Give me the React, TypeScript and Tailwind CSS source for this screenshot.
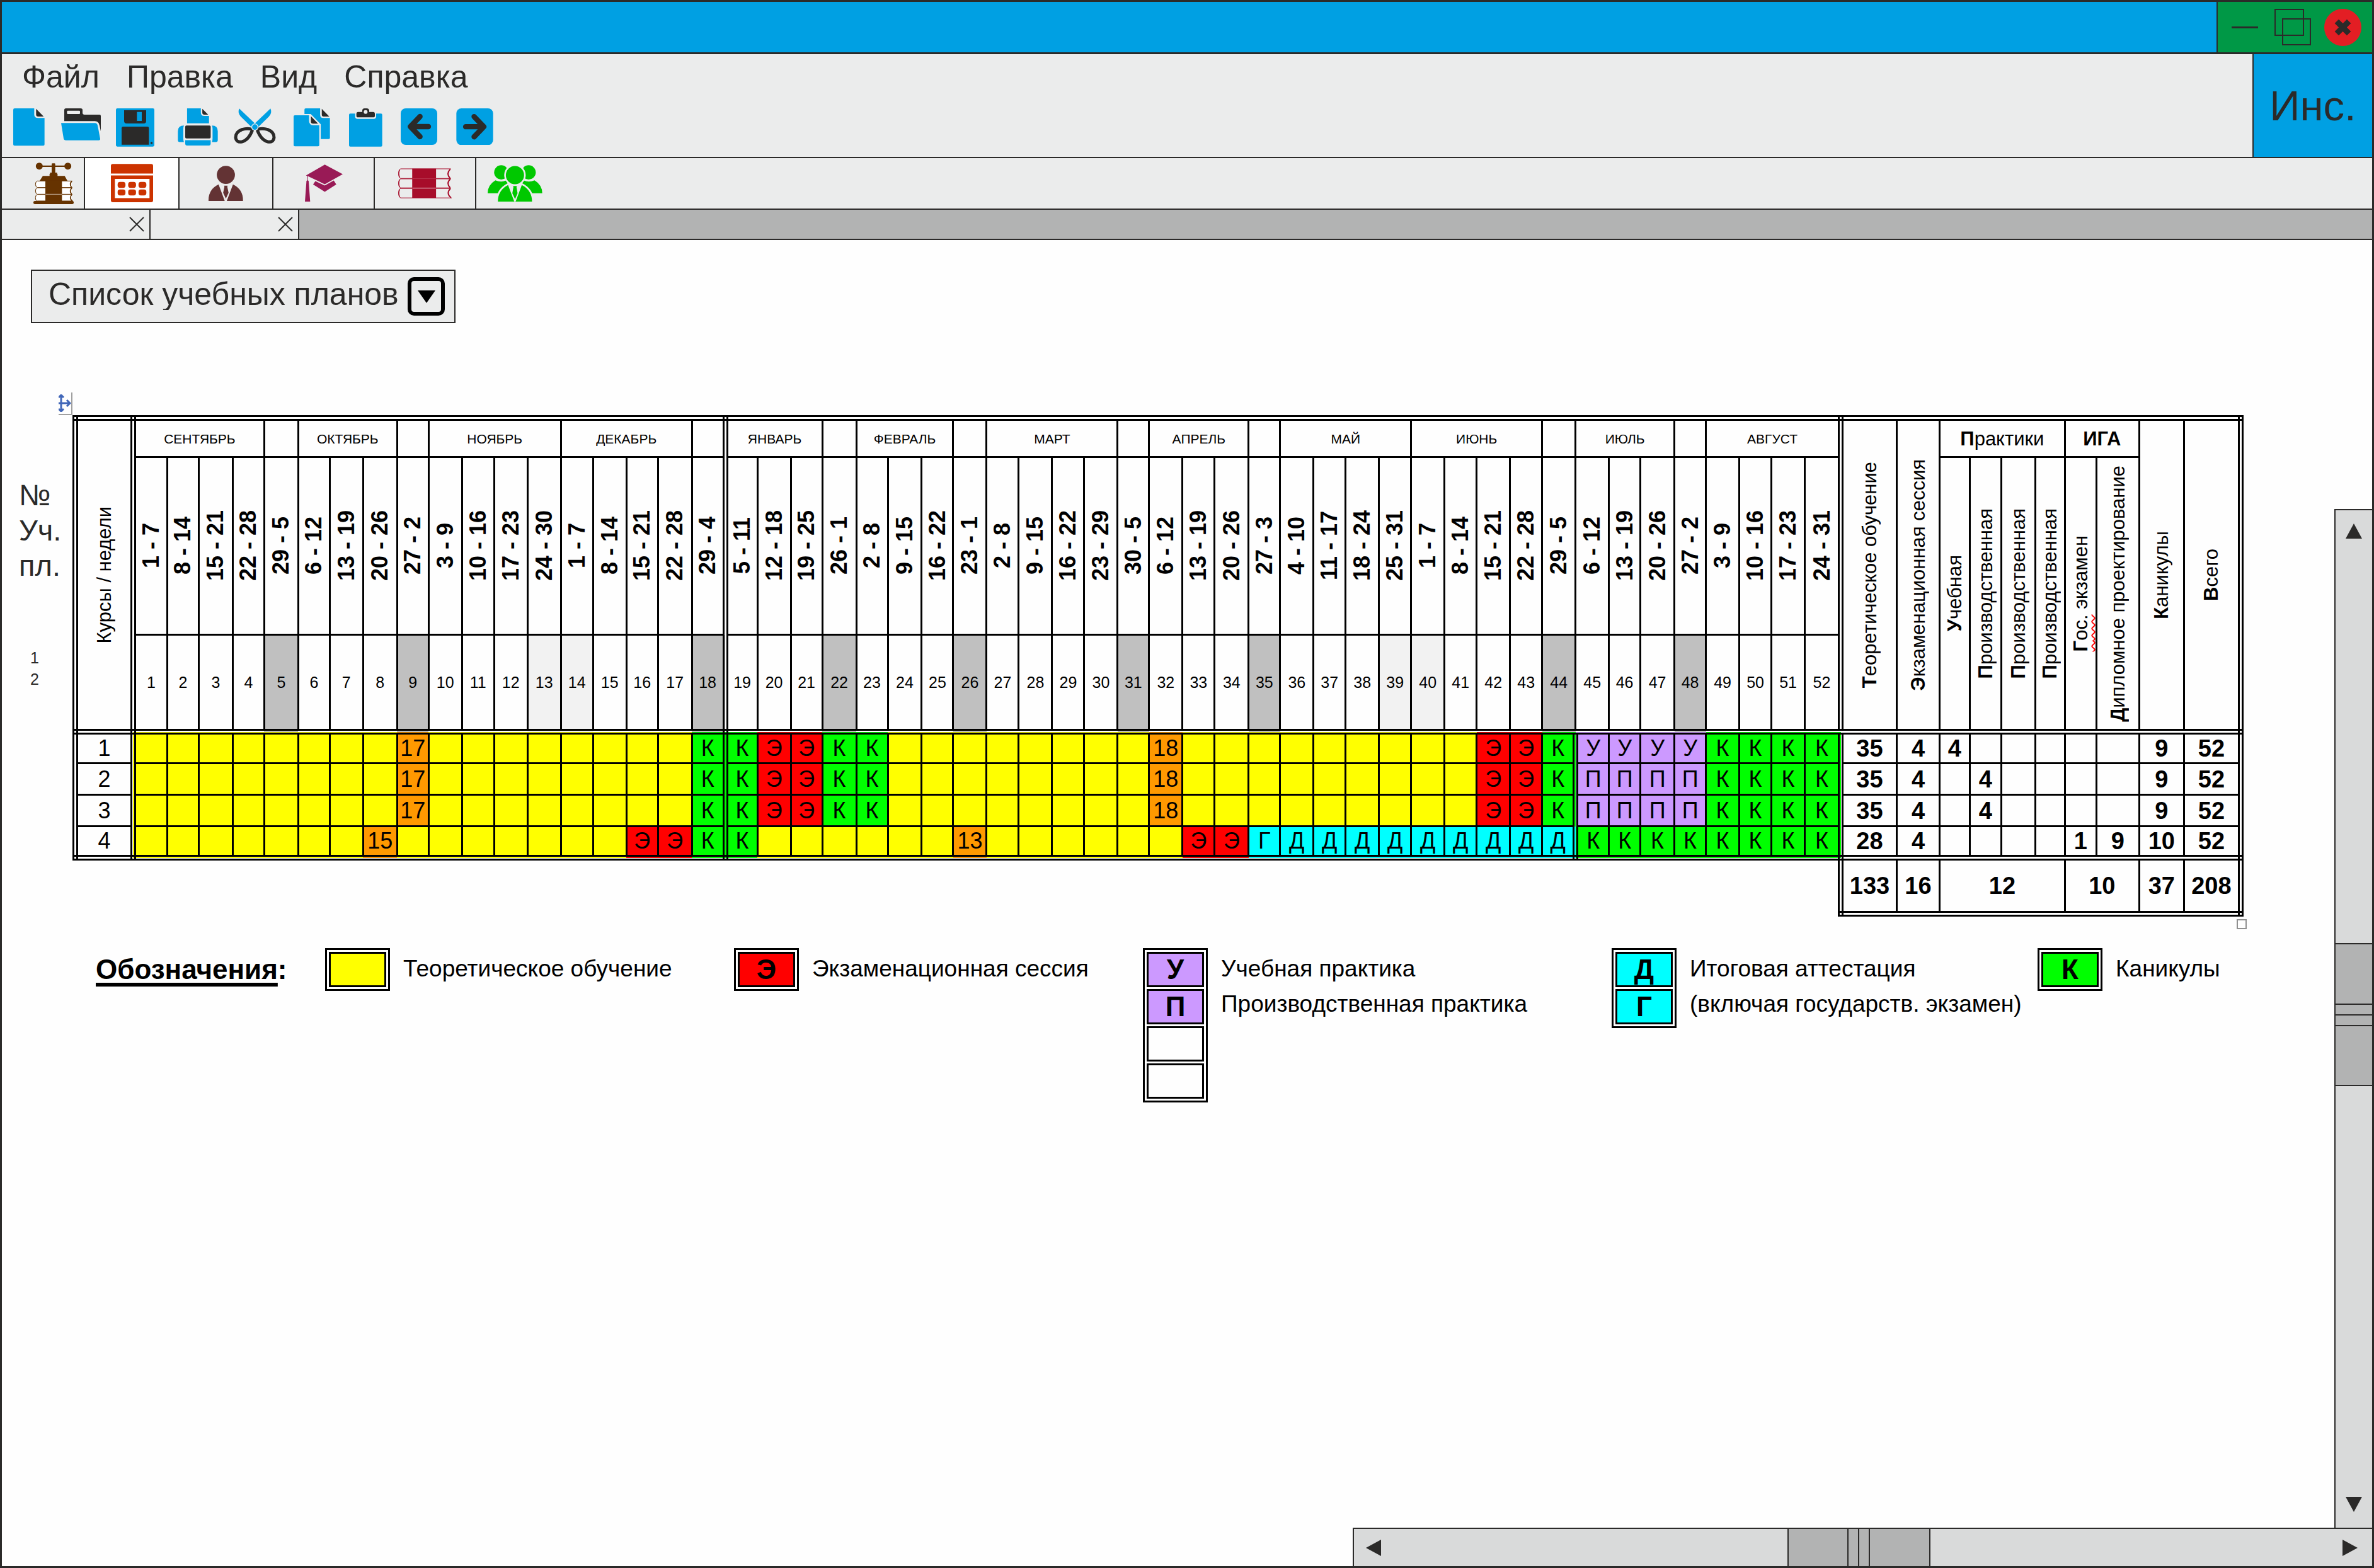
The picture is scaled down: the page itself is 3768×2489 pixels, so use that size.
import React from "react";

const COLUMN_EDGES = [
  119, 211, 265, 315, 369, 419, 473, 523, 576, 630, 680, 733, 784, 837, 890, 941, 994, 1044, 1098, 1151,
  1202, 1255, 1305, 1359, 1409, 1463, 1513, 1566, 1617, 1670, 1721, 1774, 1824, 1877, 1928, 1982, 2032,
  2085, 2136, 2189, 2240, 2293, 2344, 2397, 2448, 2501, 2554, 2604, 2658, 2708, 2761, 2812, 2865, 2922,
  3011, 3079, 3127, 3177, 3231, 3278, 3328, 3396, 3467, 3557,
];
const TOTAL_WIDTH = COLUMN_EDGES[COLUMN_EDGES.length - 1] - COLUMN_EDGES[0];

const MONTHS: [string, number][] = [
  ["СЕНТЯБРЬ", 4], ["", 1], ["ОКТЯБРЬ", 3], ["", 1], ["НОЯБРЬ", 4], ["ДЕКАБРЬ", 4], ["", 1],
  ["ЯНВАРЬ", 3], ["", 1], ["ФЕВРАЛЬ", 3], ["", 1], ["МАРТ", 4], ["", 1], ["АПРЕЛЬ", 3], ["", 1],
  ["МАЙ", 4], ["ИЮНЬ", 4], ["", 1], ["ИЮЛЬ", 3], ["", 1], ["АВГУСТ", 4],
];

const DATES = [
  "1 - 7", "8 - 14", "15 - 21", "22 - 28", "29 - 5", "6 - 12", "13 - 19", "20 - 26", "27 - 2",
  "3 - 9", "10 - 16", "17 - 23", "24 - 30", "1 - 7", "8 - 14", "15 - 21", "22 - 28", "29 - 4",
  "5 - 11", "12 - 18", "19 - 25", "26 - 1", "2 - 8", "9 - 15", "16 - 22", "23 - 1", "2 - 8",
  "9 - 15", "16 - 22", "23 - 29", "30 - 5", "6 - 12", "13 - 19", "20 - 26", "27 - 3", "4 - 10",
  "11 - 17", "18 - 24", "25 - 31", "1 - 7", "8 - 14", "15 - 21", "22 - 28", "29 - 5", "6 - 12",
  "13 - 19", "20 - 26", "27 - 2", "3 - 9", "10 - 16", "17 - 23", "24 - 31",
];

const GREY_WEEKS = [5, 9, 18, 22, 26, 31, 35, 44, 48];
const PALE_WEEKS = [13, 14, 39, 40];

const repeat = (value: string, count: number) => Array<string>(count).fill(value);

const studyYear = (practice: string) => [
  ...repeat("", 8), "17", ...repeat("", 8), "К", "К", "Э", "Э", "К", "К", ...repeat("", 8), "18",
  ...repeat("", 9), "Э", "Э", "К", ...repeat(practice, 4), ...repeat("К", 4),
];

const COURSES: { weeks: string[]; totals: string[] }[] = [
  { weeks: studyYear("У"), totals: ["35", "4", "4", "", "", "", "", "", "9", "52"] },
  { weeks: studyYear("П"), totals: ["35", "4", "", "4", "", "", "", "", "9", "52"] },
  { weeks: studyYear("П"), totals: ["35", "4", "", "4", "", "", "", "", "9", "52"] },
  {
    weeks: [
      ...repeat("", 7), "15", ...repeat("", 7), "Э", "Э", "К", "К", ...repeat("", 6), "13",
      ...repeat("", 6), "Э", "Э", "Г", ...repeat("Д", 9), ...repeat("К", 8),
    ],
    totals: ["28", "4", "", "", "", "", "1", "9", "10", "52"],
  },
];

const FILLS: Record<string, string> = {
  "": "bg-[#ffff00]",
  К: "bg-[#00ff00]",
  Э: "bg-[#ff0000]",
  У: "bg-[#cc99ff]",
  П: "bg-[#cc99ff]",
  Д: "bg-[#00ffff]",
  Г: "bg-[#00ffff]",
};
const fillFor = (value: string) => FILLS[value] ?? "bg-[#ff9900]";

const LINE = "border-[3px] border-black";
const DOUBLE_RIGHT = "border-r-[9px] [border-right-style:double]";
const DOUBLE_LEFT = "border-l-[9px] [border-left-style:double]";
const DOUBLE_TOP = "border-t-[9px] [border-top-style:double]";
const DOUBLE_BOTTOM = "border-b-[9px] [border-bottom-style:double]";

function Vertical({ children, className = "" }: { children: React.ReactNode; className?: string }) {
  return (
    <div className="flex items-center justify-center">
      <span className={`rotate-180 leading-none whitespace-nowrap [writing-mode:vertical-rl] ${className}`}>{children}</span>
    </div>
  );
}

function SummaryHead({ text, rowSpan, className = "" }: { text: string; rowSpan: number; className?: string }) {
  return (
    <th rowSpan={rowSpan} scope="col" className={`font-normal ${LINE} ${DOUBLE_BOTTOM} ${className}`}>
      <Vertical className="text-[31px]">
        <b>{text[0]}</b>
        {text.slice(1)}
      </Vertical>
    </th>
  );
}

function PlanTable() {
  return (
    <table className="w-full table-fixed border-collapse text-center leading-none text-black">
      <colgroup>
        {COLUMN_EDGES.slice(1).map((edge, i) => (
          <col key={edge} style={{ width: `${((edge - COLUMN_EDGES[i]) / TOTAL_WIDTH) * 100}%` }} />
        ))}
      </colgroup>
      <thead>
        <tr className="h-[62px]">
          <th rowSpan={3} scope="col" className={`font-normal ${LINE} ${DOUBLE_LEFT} ${DOUBLE_RIGHT} ${DOUBLE_TOP} ${DOUBLE_BOTTOM}`}>
            <Vertical className="text-[31px]">Курсы / недели</Vertical>
          </th>
          {MONTHS.map(([name, span], i) => (
            <th
              key={i}
              colSpan={span}
              scope="colgroup"
              className={`text-[21px] font-normal ${LINE} ${DOUBLE_TOP} ${i === 6 || i === 20 ? DOUBLE_RIGHT : ""}`}
            >
              {name}
            </th>
          ))}
          <SummaryHead text="Теоретическое обучение" rowSpan={3} className={DOUBLE_TOP} />
          <SummaryHead text="Экзаменационная сессия" rowSpan={3} className={DOUBLE_TOP} />
          <th colSpan={4} scope="colgroup" className={`text-[31px] font-normal ${LINE} ${DOUBLE_TOP}`}>
            <b>П</b>рактики
          </th>
          <th colSpan={2} scope="colgroup" className={`text-[31px] font-bold ${LINE} ${DOUBLE_TOP}`}>
            ИГА
          </th>
          <SummaryHead text="Каникулы" rowSpan={3} className={DOUBLE_TOP} />
          <SummaryHead text="Всего" rowSpan={3} className={`${DOUBLE_TOP} ${DOUBLE_RIGHT}`} />
        </tr>
        <tr className="h-[282px]">
          {DATES.map((date, i) => (
            <th key={i} scope="col" className={`${LINE} ${i === 17 || i === 51 ? DOUBLE_RIGHT : ""}`}>
              <Vertical className="text-[36px] font-bold">{date}</Vertical>
            </th>
          ))}
          <SummaryHead text="Учебная" rowSpan={2} />
          <SummaryHead text="Производственная" rowSpan={2} />
          <SummaryHead text="Производственная" rowSpan={2} />
          <SummaryHead text="Производственная" rowSpan={2} />
          <th rowSpan={2} scope="col" className={`font-normal ${LINE} ${DOUBLE_BOTTOM}`}>
            <Vertical className="text-[31px]">
              <span className="underline decoration-[#ff0000] decoration-wavy decoration-2 [text-decoration-skip-ink:none]">
                <b>Г</b>ос.
              </span>{" "}
              экзамен
            </Vertical>
          </th>
          <SummaryHead text="Дипломное проектирование" rowSpan={2} />
        </tr>
        <tr className="h-[154px]">
          {DATES.map((_, i) => (
            <th
              key={i}
              scope="col"
              className={`text-[25px] font-normal ${LINE} ${DOUBLE_BOTTOM} ${i === 17 || i === 51 ? DOUBLE_RIGHT : ""} ${
                GREY_WEEKS.includes(i + 1) ? "bg-[#c0c0c0]" : PALE_WEEKS.includes(i + 1) ? "bg-[#f2f2f2]" : ""
              }`}
            >
              {i + 1}
            </th>
          ))}
        </tr>
      </thead>
      <tbody>
        {COURSES.map(({ weeks, totals }, row) => {
          const bottom = row === 3 ? DOUBLE_BOTTOM : "";
          return (
            <tr key={row} className="h-[50px]">
              <th scope="row" className={`text-[36px] font-normal ${LINE} ${DOUBLE_LEFT} ${DOUBLE_RIGHT} ${bottom}`}>
                {row + 1}
              </th>
              {weeks.map((value, i) => (
                <td
                  key={i}
                  className={`text-[36px] ${LINE} ${fillFor(value)} ${bottom} ${
                    i === 17 || i === 43 || i === 51 ? DOUBLE_RIGHT : ""
                  }`}
                >
                  {value}
                </td>
              ))}
              {totals.map((value, i) => (
                <td key={i} className={`text-[38px] font-bold ${LINE} ${bottom} ${i === 9 ? DOUBLE_RIGHT : ""}`}>
                  {value}
                </td>
              ))}
            </tr>
          );
        })}
      </tbody>
      <tfoot>
        <tr className="h-[89px]">
          <td colSpan={53} />
          {(
            [["133", 1], ["16", 1], ["12", 4], ["10", 2], ["37", 1], ["208", 1]] as [string, number][]
          ).map(([value, span], i) => (
            <td
              key={value}
              colSpan={span}
              className={`text-[38px] font-bold ${LINE} ${DOUBLE_BOTTOM} ${i === 0 ? DOUBLE_LEFT : ""} ${i === 5 ? DOUBLE_RIGHT : ""}`}
            >
              {value}
            </td>
          ))}
        </tr>
      </tfoot>
    </table>
  );
}

function LegendItem({ boxes, lines }: { boxes: string[]; lines: string[] }) {
  return (
    <li className="flex items-start gap-[21px]">
      <div className="flex w-[103px] shrink-0 flex-col gap-[3px] border-[3px] border-black p-[3px] text-[44px]">
        {boxes.map((box, i) => (
          <span
            key={i}
            className={`flex h-[56px] items-center justify-center border-[3px] border-black font-bold ${box === "-" ? "" : fillFor(box)}`}
          >
            {box === "-" ? "" : box}
          </span>
        ))}
      </div>
      <div className="pt-[5px] text-[37px] leading-[56px] whitespace-nowrap">
        {lines.map((line) => (
          <p key={line}>{line}</p>
        ))}
      </div>
    </li>
  );
}

function Legend() {
  return (
    <section className="grid grid-cols-[364fr_3045fr] leading-none text-black">
      <h2 className="pt-[12px] text-[44px] font-bold">
        <span className="underline decoration-[6px] underline-offset-[6px]">Обозначения</span>:
      </h2>
      <ul className="grid grid-cols-[649fr_649fr_744fr_676fr_327fr] items-start">
        <LegendItem boxes={[""]} lines={["Теоретическое обучение"]} />
        <LegendItem boxes={["Э"]} lines={["Экзаменационная сессия"]} />
        <LegendItem boxes={["У", "П", "-", "-"]} lines={["Учебная практика", "Производственная практика"]} />
        <LegendItem boxes={["Д", "Г"]} lines={["Итоговая аттестация", "(включая государств. экзамен)"]} />
        <LegendItem boxes={["К"]} lines={["Каникулы"]} />
      </ul>
    </section>
  );
}

const BLUE = "#00a0e3";
const DARK = "#2b2a29";
const PANEL = "#ebecec";

const TOOLS: { label: string; box: string; size: string; slot: string; art: React.ReactNode }[] = [
  {
    label: "Создать", box: "63 36 150 179", size: "w-[50px]", slot: "w-[76px]",
    art: (
      <>
        <path fill={BLUE} d="M70 36H163V66Q163 82 182 82H212V208Q212 214 206 214H70Q63 214 63 208V43Q63 36 70 36Z" />
        <path fill={DARK} d="M172 38L208 75H182Q172 75 172 65Z" />
      </>
    ),
  },
  {
    label: "Открыть", box: "291 36 189 153", size: "w-[63px]", slot: "w-[87px]",
    art: (
      <>
        <path fill={DARK} d="M306 44Q306 36 314 36H384Q393 36 393 44V58Q394 66 402 66H474Q480 66 480 72V145L474 118Q470 97 452 97H306Z" />
        <rect x="319" y="47" width="62" height="16" rx="4" fill={PANEL} />
        <path fill={BLUE} d="M291 106H452Q462 106 465 118L477 181Q478 188 470 188H314Q305 188 303 180Z" />
      </>
    ),
  },
  {
    label: "Сохранить", box: "552 36 183 183", size: "w-[61px]", slot: "w-[98px]",
    art: (
      <>
        <rect x="552" y="36" width="183" height="182" rx="7" fill={BLUE} />
        <path fill={DARK} d="M591 45H696V96Q696 108 684 108H603Q591 108 591 96Z" />
        <rect x="652" y="53" width="23" height="43" fill={BLUE} />
        <path fill={DARK} d="M579 130Q579 123 586 123H702Q709 123 709 130V209H579Z" />
        <rect x="717" y="196" width="9" height="10" fill={DARK} />
      </>
    ),
  },
  {
    label: "Печать", box: "846 36 193 179", size: "w-[64px]", slot: "w-[89px]",
    art: (
      <>
        <path fill={BLUE} d="M891 36H957V56Q957 72 973 72H996V108H891Z" />
        <path fill={DARK} d="M964 38L992 66H974Q964 66 964 57Z" />
        <path fill={BLUE} d="M876 118Q873 125 873 135V180Q873 190 876 197H856Q847 197 847 188V145Q847 118 876 118Z" />
        <path fill={BLUE} d="M1010 118Q1013 125 1013 135V180Q1013 190 1010 197H1029Q1038 197 1038 188V145Q1038 118 1010 118Z" />
        <rect x="882" y="118" width="122" height="62" rx="6" fill={DARK} />
        <path fill={BLUE} d="M882 188H1004V204Q1004 214 994 214H892Q882 214 882 204Z" />
      </>
    ),
  },
  {
    label: "Вырезать", box: "1111 36 201 170", size: "w-[67px]", slot: "w-[95px]",
    art: (
      <>
        <path fill={BLUE} d="M1137 37Q1128 59 1145 76L1194 124L1211 107Z" />
        <path fill={BLUE} d="M1286 37Q1295 59 1278 76L1229 124L1212 107Z" />
        <path fill="none" stroke={DARK} strokeWidth="15" d="M1201 137Q1178 128 1150 137Q1119 149 1120 175Q1123 200 1150 195Q1182 188 1201 137Z" />
        <path fill="none" stroke={DARK} strokeWidth="15" d="M1222 137Q1245 128 1273 137Q1304 149 1303 175Q1300 200 1273 195Q1241 188 1222 137Z" />
        <circle cx="1211.500" cy="125" r="15" fill={BLUE} stroke={PANEL} strokeWidth="4" />
      </>
    ),
  },
  {
    label: "Копировать", box: "108 36 175 183", size: "w-[58px]", slot: "w-[88px]",
    art: (
      <>
        <path fill={BLUE} d="M166 36H235V66Q235 82 250 82H282V178Q282 183 276 183H238V112L190 63H160V42Q160 36 166 36Z" />
        <path fill={DARK} d="M243 38L279 75H252Q243 75 243 66Z" />
        <path fill={BLUE} d="M114 69H182V98Q184 117 203 117H231V212Q231 218 225 218H114Q108 218 108 212V75Q108 69 114 69Z" />
        <path fill={DARK} d="M191 74L225 109H201Q191 109 191 99Z" />
      </>
    ),
  },
  {
    label: "Вставить", box: "373 36 159 183", size: "w-[53px]", slot: "w-[82px]",
    art: (
      <>
        <path fill={BLUE} d="M379 61H402V74Q402 86 414 86H490Q502 86 502 74V61H525Q531 61 531 67V212Q531 218 525 218H379Q373 218 373 212V67Q373 61 379 61Z" />
        <path fill={DARK} d="M416 53H436V46Q437 36 447 36H457Q467 36 469 46V53H488Q496 53 496 62V72Q496 79 488 79H416Q408 79 408 72V62Q408 53 416 53Z" />
        <circle cx="452" cy="53" r="9" fill={PANEL} />
      </>
    ),
  },
  {
    label: "Назад", box: "618 36 174 174", size: "w-[58px]", slot: "w-[88px]",
    art: (
      <>
        <rect x="618" y="36" width="174" height="174" rx="24" fill={BLUE} />
        <path fill="none" stroke={DARK} strokeWidth="25" strokeLinecap="round" strokeLinejoin="round" d="M710 75L664 123L710 171M668 123H750" />
      </>
    ),
  },
  {
    label: "Вперёд", box: "882 36 176 174", size: "w-[59px]", slot: "w-[59px]",
    art: (
      <>
        <rect x="883" y="36" width="174" height="174" rx="24" fill={BLUE} />
        <path fill="none" stroke={DARK} strokeWidth="25" strokeLinecap="round" strokeLinejoin="round" d="M967 75L1013 123L967 171M1009 123H927" />
      </>
    ),
  },
];

const BROWN = "#663300";
const CRIMSON = "#a70d2a";

const SECTIONS: { label: string; slot: string; box: string; size: string; art: React.ReactNode }[] = [
  {
    label: "Издания", slot: "w-[132px] border-r-2 pl-[50px]", box: "159 294 192 199", size: "w-[64px]",
    art: (
      <>
        <g fill={BROWN}>
          <circle cx="187" cy="311" r="16.500" />
          <circle cx="323" cy="311" r="16.500" />
          <path d="M187 308H323V315H187ZM246 302Q246 298 250 298H259Q263 298 263 302V342H272V348H274V358H308L321 381H189L204 358H236V348H238V342H246Z" />
        </g>
        <path fill="#fff" d="M172 382H341V477H172Z" />
        <rect x="216" y="381" width="79" height="96" fill={BROWN} />
        <g fill="none" stroke={BROWN} strokeWidth="3">
          <path d="M344 382H178Q169 384 169 397Q169 411 178 413H344M344 414H178Q169 416 169 429Q169 443 178 445H344M344 446H178Q169 448 169 461Q169 476 178 477H348" />
          <path strokeWidth="5" d="M342 383Q328 397 341 412M342 415Q328 429 341 444M342 447Q328 461 343 477" />
        </g>
        <path stroke="#fff" strokeWidth="2" d="M217 445H295" />
        <rect x="159" y="477" width="192" height="15" rx="7" fill={BROWN} />
      </>
    ),
  },
  {
    label: "Учебные планы", slot: "w-[150px] justify-center border-r-2 bg-white", box: "531 309 200 183", size: "w-[67px]",
    art: (
      <g fill="#cc3300">
        <path d="M540 310H722Q731 310 731 319V355H531V319Q531 310 540 310Z" />
        <path fillRule="evenodd" d="M531 364H731V482Q731 491 722 491H540Q531 491 531 482ZM550 381V472H714V381Z" />
        {[395, 431].map((y) => [563, 613, 662].map((x) => <rect key={`${x}-${y}`} x={x} y={y} width="37" height="28" rx="11" />))}
      </g>
    ),
  },
  {
    label: "Преподаватели", slot: "w-[149px] justify-center border-r-2", box: "990 318 166 171", size: "w-[55px]",
    art: (
      <g fill="#633334">
        <circle cx="1073" cy="362" r="43.500" />
        <path d="M990 488Q988 432 1038 408L1068 488Z" />
        <path d="M1155 488Q1157 432 1107 408L1077 488Z" />
        <path d="M1065 414H1081L1080 420L1086 448L1073 476L1060 448L1066 420Z" />
      </g>
    ),
  },
  {
    label: "Студенты", slot: "w-[161px] justify-center border-r-2", box: "171 308 181 179", size: "w-[60px]",
    art: (
      <g fill="#991a56">
        <path d="M266 309L352 355L266 403L189 366L185 364V384Q190 386 189 392L196 486H171L178 392Q177 386 182 384V364L176 361Z" />
        <path d="M221 388L266 409L309 385L321 404L266 439L210 404Z" />
      </g>
    ),
  },
  {
    label: "Библиотека", slot: "w-[161px] justify-center border-r-2", box: "597 326 262 145", size: "w-[87px]",
    art: (
      <>
        <rect x="667" y="328" width="114" height="140" fill={CRIMSON} />
        <g fill="none" stroke={CRIMSON} strokeWidth="3">
          <path d="M852 329H612Q602 331 602 351Q602 372 612 375H852M852 377H612Q602 379 602 398Q602 417 612 420H852M852 423H612Q602 425 602 444Q602 465 612 468H856" />
          <path strokeWidth="4" d="M607 334Q599 351 607 370M607 381Q599 398 607 416M607 428Q599 445 607 463" />
          <path strokeWidth="6" d="M849 330Q828 352 848 374M849 378Q828 398 848 419M849 424Q828 446 852 467" />
        </g>
        <path stroke="#fff" strokeWidth="3" d="M668 421H780" />
        <path stroke="#d98a98" strokeWidth="1" d="M668 376H780" />
      </>
    ),
  },
  {
    label: "Группы", slot: "w-[124px] pl-[18px]", box: "1034 305 262 175", size: "w-[87px]",
    art: (
      <g fill="#00c800">
        <circle cx="1099" cy="340" r="34" />
        <circle cx="1230" cy="340" r="34" />
        <path d="M1034 440Q1034 400 1071 378Q1098 390 1122 379L1140 410V440Z" />
        <path d="M1295 440Q1295 400 1258 378Q1231 390 1207 379L1189 410V440Z" />
        <path stroke={PANEL} strokeWidth="8" d="M1079 484Q1077 423 1131 396H1198Q1252 423 1250 484Z" />
        <path fill={PANEL} d="M1130 396L1161 479H1168L1199 396Z" />
        <circle cx="1164.500" cy="353" r="47.500" stroke={PANEL} strokeWidth="8" />
        <path d="M1156 405H1173L1172 411L1177 440L1165 468L1152 440L1157 411Z" />
      </g>
    ),
  },
];

function ScrollThumb({ vertical = false }: { vertical?: boolean }) {
  return (
    <div
      className={
        vertical
          ? "flex flex-col justify-center gap-[15px] border-y-2 border-[#2b2a29] bg-[#b2b3b3]"
          : "flex justify-center gap-[15px] border-x-2 border-[#2b2a29] bg-[#b2b3b3]"
      }
    >
      {[0, 1, 2].map((i) => (
        <span key={i} className={vertical ? "h-[2px] w-full bg-[#2b2a29]" : "h-full w-[2px] bg-[#2b2a29]"} />
      ))}
    </div>
  );
}

function Triangle({ points, className }: { points: string; className: string }) {
  return (
    <svg viewBox="0 0 26 26" className={className} fill={DARK} aria-hidden="true">
      <polygon points={points} />
    </svg>
  );
}

export default function App() {
  return (
    <div className="flex min-h-screen flex-col border-[3px] border-[#2b2a29] bg-[#fefefe] font-['Liberation_Sans',Arial,sans-serif] text-[#2b2a29]">
      <header className="flex h-[83px] justify-end border-b-[3px] border-[#2b2a29] bg-[#00a0e3]">
        <div className="flex items-center gap-[21px] border-l-2 border-[#2b2a29] bg-[#009846] pr-[17px] pl-[22px]">
          <button type="button" aria-label="Свернуть" className="flex h-[60px] w-[47px] items-center">
            <span className="h-[3px] w-[42px] bg-[#2b2a29]" />
          </button>
          <button type="button" aria-label="Развернуть">
            <svg viewBox="0 0 58 58" className="size-[58px]" fill="none" stroke={DARK} strokeWidth="2">
              <rect x="1" y="1" width="45" height="41" />
              <rect x="13" y="16" width="44" height="41" />
            </svg>
          </button>
          <button type="button" aria-label="Закрыть">
            <svg viewBox="0 0 59 59" className="size-[59px]">
              <circle cx="29.500" cy="29.500" r="29.500" fill="#e31e24" />
              <path stroke={DARK} strokeWidth="9" strokeLinecap="square" d="M23 23L36 36M36 23L23 36" />
            </svg>
          </button>
        </div>
      </header>

      <div className="flex h-[165px] border-b-2 border-[#2b2a29] bg-[#ebecec]">
        <div className="flex-1">
          <nav className="flex h-[86px] items-center gap-[43px] pb-[14px] pl-[32px] text-[50px] leading-none">
            <button type="button">Файл</button>
            <button type="button">Правка</button>
            <button type="button">Вид</button>
            <button type="button">Справка</button>
          </nav>
          <div className="flex pl-[18px]">
            {TOOLS.map(({ label, box, size, slot, art }) => (
              <button key={label} type="button" aria-label={label} className={`flex items-start ${slot}`}>
                <svg viewBox={box} className={size}>
                  {art}
                </svg>
              </button>
            ))}
          </div>
        </div>
        <button type="button" className="w-[190px] border-l-2 border-[#2b2a29] bg-[#00a0e3] text-[67px] leading-none">
          Инс.
        </button>
      </div>

      <nav className="flex h-[82px] border-b-2 border-[#2b2a29] bg-[#ebecec]">
        {SECTIONS.map(({ label, slot, box, size, art }) => (
          <button key={label} type="button" aria-label={label} className={`flex items-center border-[#2b2a29] ${slot}`}>
            <svg viewBox={box} className={size}>
              {art}
            </svg>
          </button>
        ))}
      </nav>

      <div className="flex h-[48px] border-b-2 border-[#2b2a29] bg-[#b2b3b3]">
        {[1, 2].map((tab) => (
          <div key={tab} className="flex w-[236px] items-center justify-end border-r-2 border-[#2b2a29] bg-[#ebecec] pr-[8px]">
            <button type="button" aria-label={`Закрыть вкладку ${tab}`}>
              <svg viewBox="0 0 24 24" className="size-[24px]" stroke={DARK} strokeWidth="2">
                <path d="M1 1L23 23M23 1L1 23" />
              </svg>
            </button>
          </div>
        ))}
      </div>

      <div className="grid flex-1 grid-cols-[1fr_60px] grid-rows-[1fr_61px]">
        <main className="pt-[47px]">
          <div className="relative ml-[46px] w-fit">
            <select
              aria-label="Список учебных планов"
              className="h-[85px] w-[674px] appearance-none border-2 border-[#2b2a29] bg-[#ebecec] pr-[80px] pb-[8px] pl-[26px] text-[50px] leading-none"
            >
              <option>Список учебных планов</option>
            </select>
            <span className="pointer-events-none absolute inset-y-[12px] right-[17px] flex w-[59px] items-center justify-center rounded-[10px] border-[6px] border-black">
              <svg viewBox="0 0 28 20" className="w-[28px]" aria-hidden="true">
                <polygon points="0,0 28,0 14,20" />
              </svg>
            </span>
          </div>

          <div className="mt-[110px] grid grid-cols-[112px_1fr] pr-[144px]">
            <div className="flex h-[36px] w-[22px] items-center justify-end justify-self-end border-r-2 border-b-2 border-[#a0a0a0]">
              <svg viewBox="0 0 20 28" className="h-[28px] w-[20px]" fill="none" stroke="#4066b8" strokeWidth="3" aria-hidden="true">
                <path d="M4 2V26M0 14H16M0 5L4 1L8 5M0 23L4 27L8 23M13 9L18 14L13 19" />
              </svg>
            </div>
            <div />
            <div className="pt-[99px] pl-[27px]">
              <p className="text-[47px] leading-[56px]">
                №<br />
                Уч.
                <br />
                пл.
              </p>
              <ol className="pt-[101px] pl-[18px] text-[25px] leading-[34px]">
                <li>1</li>
                <li>2</li>
              </ol>
            </div>
            <div>
              <PlanTable />
              <div className="mt-[4px] flex justify-end">
                <span className="-mr-[5px] size-[16px] border-2 border-[#909090]" />
              </div>
            </div>
          </div>

          <div className="mt-[30px] pr-[144px] pl-[149px]">
            <Legend />
          </div>
        </main>

        <aside className="mt-[427px] grid grid-rows-[688fr_227px_702fr] border-t-2 border-l-2 border-[#2b2a29] bg-[#d9dada]">
          <button type="button" aria-label="Вверх" className="flex justify-center pt-[20px]">
            <Triangle points="0,25 13,1 26,25" className="size-[26px]" />
          </button>
          <ScrollThumb vertical />
          <button type="button" aria-label="Вниз" className="flex items-end justify-center pb-[24px]">
            <Triangle points="0,1 26,1 13,25" className="size-[26px]" />
          </button>
        </aside>

        <div className="col-span-2 ml-[57%] grid grid-cols-[688fr_227px_702fr] border-t-2 border-l-2 border-[#2b2a29] bg-[#d9dada]">
          <button type="button" aria-label="Влево" className="flex items-center pl-[18px]">
            <Triangle points="25,0 1,13 25,26" className="size-[26px]" />
          </button>
          <ScrollThumb />
          <button type="button" aria-label="Вправо" className="flex items-center justify-end pr-[22px]">
            <Triangle points="1,0 25,13 1,26" className="size-[26px]" />
          </button>
        </div>
      </div>
    </div>
  );
}
